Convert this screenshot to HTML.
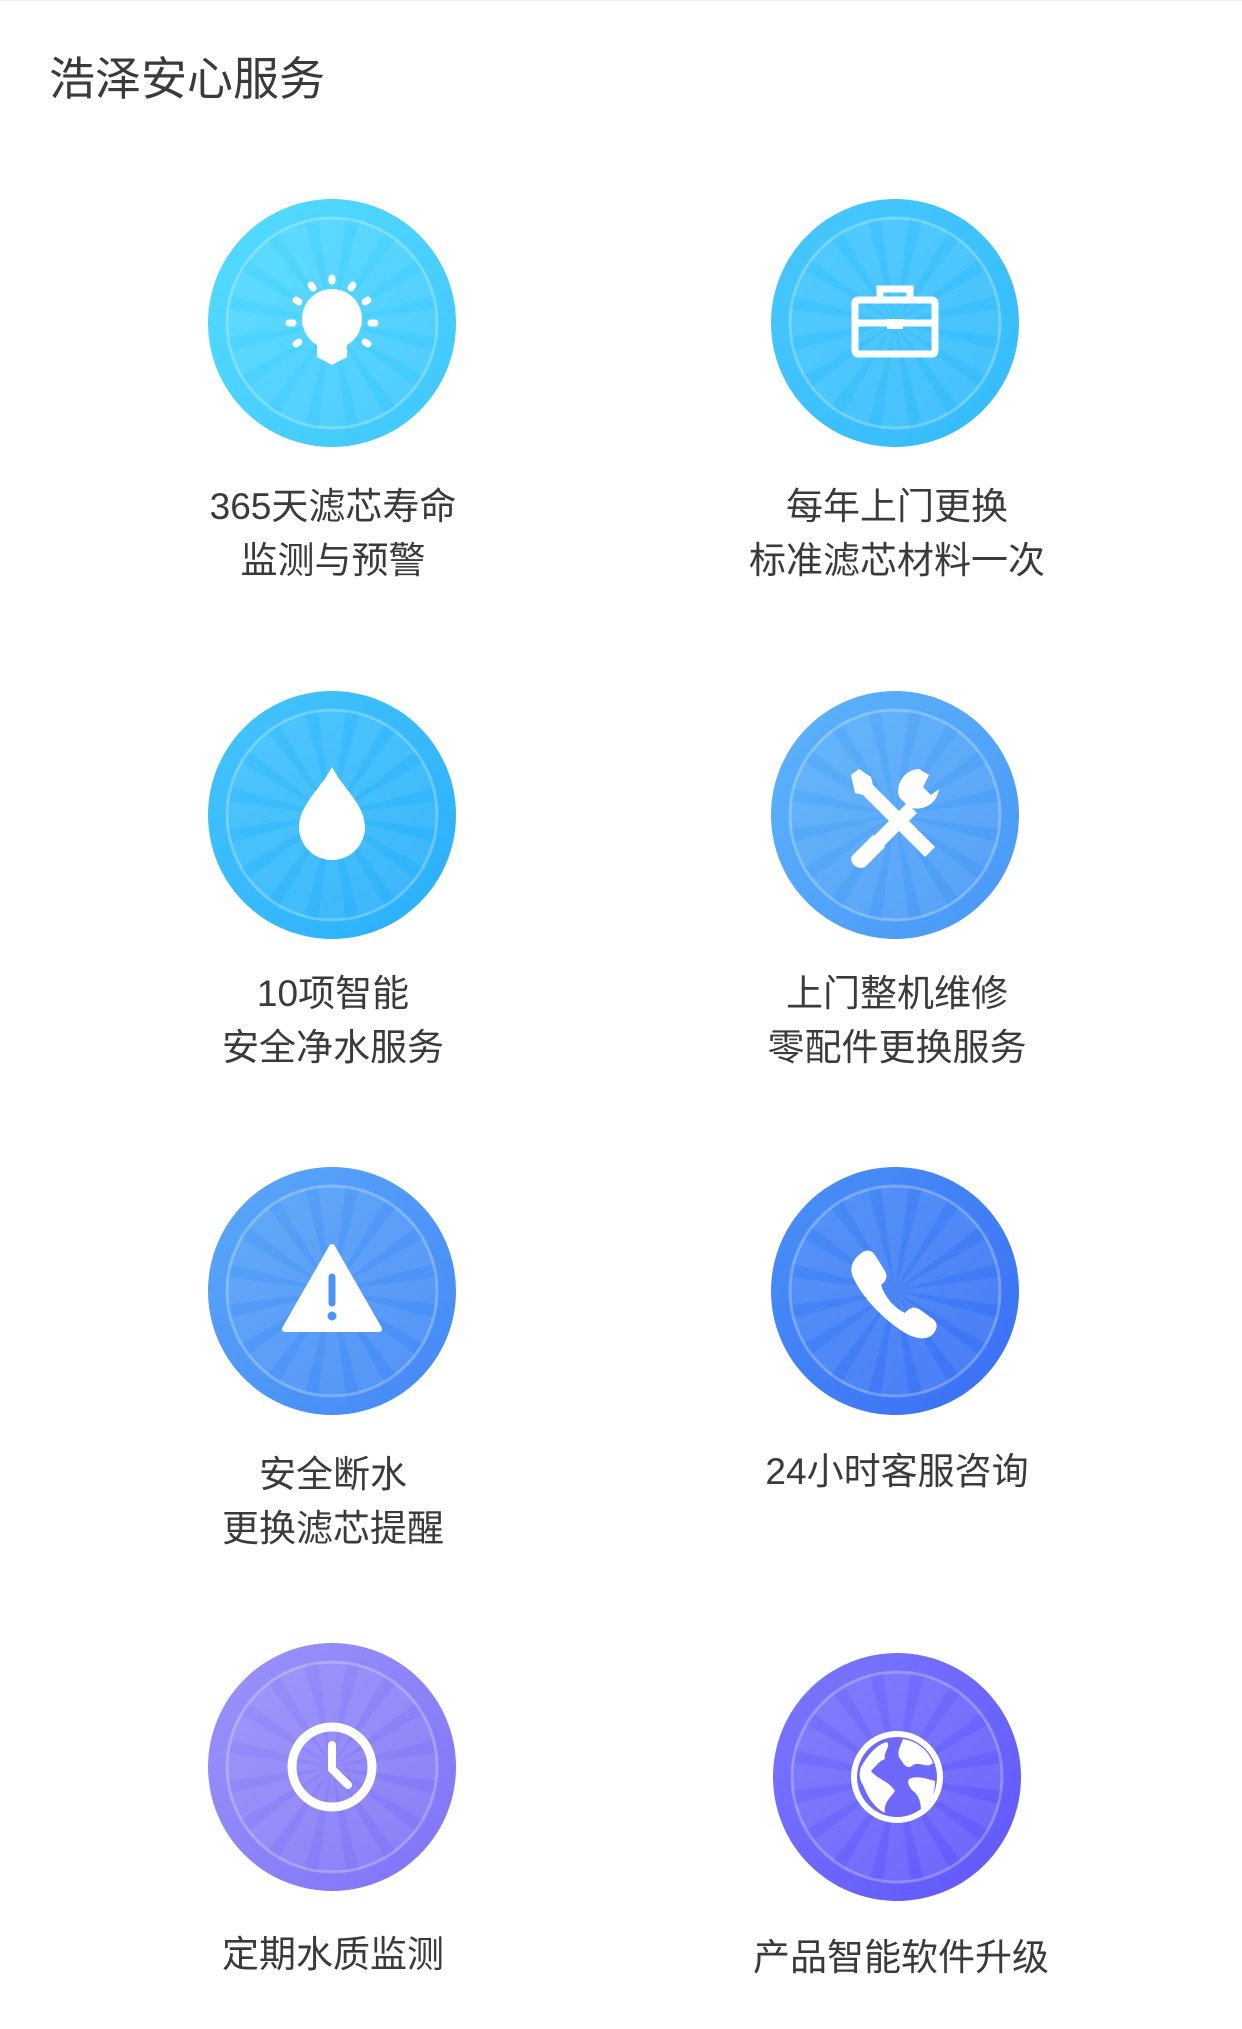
<!DOCTYPE html>
<html><head><meta charset="utf-8"><style>
body{margin:0;background:#fff;width:1242px;height:2029px;position:relative;overflow:hidden;font-family:"Liberation Sans","Noto Sans CJK SC",sans-serif;color:#3a3a3a}
.t{position:absolute;left:49px;top:43px;font-size:46px;color:#3a3a3a}
.l{position:absolute;width:520px;text-align:center;font-size:37px;line-height:54px;color:#3a3a3a}
svg{position:absolute;left:0;top:0}
</style></head><body>
<div style="position:absolute;left:0;top:0;width:1242px;height:1px;background:#eee"></div>
<div class="t">浩泽安心服务</div>
<svg width="1242" height="2029">
<defs>
<g id="rays">
<g fill="#fff" opacity="0.07">
<path d="M0 0L-14 -105L14 -105Z" transform="rotate(0)"/><path d="M0 0L-14 -105L14 -105Z" transform="rotate(22.5)"/><path d="M0 0L-14 -105L14 -105Z" transform="rotate(45)"/><path d="M0 0L-14 -105L14 -105Z" transform="rotate(67.5)"/><path d="M0 0L-14 -105L14 -105Z" transform="rotate(90)"/><path d="M0 0L-14 -105L14 -105Z" transform="rotate(112.5)"/><path d="M0 0L-14 -105L14 -105Z" transform="rotate(135)"/><path d="M0 0L-14 -105L14 -105Z" transform="rotate(157.5)"/><path d="M0 0L-14 -105L14 -105Z" transform="rotate(180)"/><path d="M0 0L-14 -105L14 -105Z" transform="rotate(202.5)"/><path d="M0 0L-14 -105L14 -105Z" transform="rotate(225)"/><path d="M0 0L-14 -105L14 -105Z" transform="rotate(247.5)"/><path d="M0 0L-14 -105L14 -105Z" transform="rotate(270)"/><path d="M0 0L-14 -105L14 -105Z" transform="rotate(292.5)"/><path d="M0 0L-14 -105L14 -105Z" transform="rotate(315)"/><path d="M0 0L-14 -105L14 -105Z" transform="rotate(337.5)"/>
</g>
<circle r="105" fill="none" stroke="#fff" stroke-opacity="0.25" stroke-width="3"/>
</g>
<linearGradient id="g1" x1="0" y1="0" x2="1" y2="1"><stop offset="0" stop-color="#55dcfe"/><stop offset="1" stop-color="#3fc6fd"/></linearGradient>
<linearGradient id="g2" x1="0" y1="0" x2="1" y2="1"><stop offset="0" stop-color="#47c8fd"/><stop offset="1" stop-color="#35bbfc"/></linearGradient>
<linearGradient id="g3" x1="0" y1="0" x2="1" y2="1"><stop offset="0" stop-color="#45c5fd"/><stop offset="1" stop-color="#29aefb"/></linearGradient>
<linearGradient id="g4" x1="0" y1="0" x2="1" y2="1"><stop offset="0" stop-color="#5db4fa"/><stop offset="1" stop-color="#4996f8"/></linearGradient>
<linearGradient id="g5" x1="0" y1="0" x2="1" y2="1"><stop offset="0" stop-color="#5aa8f9"/><stop offset="1" stop-color="#4487f6"/></linearGradient>
<linearGradient id="g6" x1="0" y1="0" x2="1" y2="1"><stop offset="0" stop-color="#4a91f7"/><stop offset="1" stop-color="#3a6ef5"/></linearGradient>
<linearGradient id="g7" x1="0" y1="0" x2="1" y2="1"><stop offset="0" stop-color="#9a94fa"/><stop offset="1" stop-color="#7f72f7"/></linearGradient>
<linearGradient id="g8" x1="0" y1="0" x2="1" y2="1"><stop offset="0" stop-color="#7b78fd"/><stop offset="1" stop-color="#5f56fc"/></linearGradient>
</defs>
<g transform="translate(332,323)"><circle r="124" fill="url(#g1)"/><use href="#rays"/>
<circle cx="0" cy="-4" r="30" fill="#fff"/><path d="M-15 16H15V34L0 42L-15 34Z" fill="#fff"/>
<g stroke="#fff" stroke-width="7" stroke-linecap="round"><path d="M0 -45v3M-21 -38l2 3M21 -38l-2 3M-36 -23l3 2M36 -23l-3 2M-43 0h4M43 0h-4M-36 21l3 -2M36 21l-3 -2"/></g></g>
<g transform="translate(895,323)"><circle r="124" fill="url(#g2)"/><use href="#rays"/>
<g fill="none" stroke="#fff" stroke-width="7"><rect x="-40" y="-23" width="80" height="54" rx="3"/><path d="M-15 -23v-11h30v11M-40 0h80"/></g><rect x="-8" y="-4" width="16" height="10" fill="#fff"/></g>
<g transform="translate(332,815)"><circle r="124" fill="url(#g3)"/><use href="#rays"/>
<path d="M0 -48C-10 -28 -33 -10 -33 12A33 33 0 0 0 33 12C33 -10 10 -28 0 -48Z" fill="#fff"/></g>
<g transform="translate(895,815)"><circle r="124" fill="url(#g4)"/><use href="#rays"/>
<g fill="#fff"><path d="M-44 -40L-36 -46L-24 -38L-22 -30L40 32L30 42L-32 -20L-40 -22Z"/>
<path d="M12 -12L-30 30L-20 40L22 -2Z"/>
<path d="M24 -46A22 22 0 0 0 4 -18L14 -8A22 22 0 0 0 44 -26L36 -20L28 -28L34 -40Z"/>
<path d="M-22 20L-44 42A10 10 0 0 0 -30 52L-10 32Z"/></g></g>
<g transform="translate(332,1291)"><circle r="124" fill="url(#g5)"/><use href="#rays"/>
<path d="M0 -44L-47 38H47Z" fill="#fff" stroke="#fff" stroke-width="6" stroke-linejoin="round"/><path d="M0 -14V12" stroke="#4a95f7" stroke-width="7" stroke-linecap="round"/><circle cy="25" r="4.5" fill="#4a95f7"/></g>
<g transform="translate(895,1291)"><circle r="124" fill="url(#g6)"/><use href="#rays"/>
<path d="M-36 -36C-30 -42 -24 -42 -20 -36L-10 -20C-7 -14 -9 -10 -14 -6C-10 6 -2 16 10 22C14 17 18 15 24 18L38 28C43 32 43 38 37 44C30 50 18 48 4 38C-16 24 -34 4 -42 -14C-46 -24 -42 -31 -36 -36Z" fill="#fff"/></g>
<g transform="translate(332,1767)"><circle r="124" fill="url(#g7)"/><use href="#rays"/>
<circle r="40" fill="none" stroke="#fff" stroke-width="9"/><path d="M0 -22V2L16 18" fill="none" stroke="#fff" stroke-width="8" stroke-linecap="round"/></g>
<g transform="translate(897,1777)"><circle r="124" fill="url(#g8)"/><use href="#rays"/>
<circle r="46" fill="#fff"/><circle r="40" fill="#6e68fc"/>
<path d="M-36 -10C-30 -20 -22 -32 -10 -35C-6 -30 -14 -25 -12 -18C-18 -16 -22 -10 -26 -6C-20 2 -8 4 -2 14C-6 20 -14 26 -12 36C-24 30 -30 18 -34 8C-38 2 -38 -4 -36 -10Z M6 -38C20 -36 32 -26 36 -14C30 -8 22 -16 16 -12C10 -6 6 -14 2 -20C0 -26 4 -32 6 -38Z M12 2C20 -2 30 2 38 4C38 18 32 28 24 34C24 26 22 18 16 14C12 10 10 6 12 2Z" fill="#fff"/></g>
</svg>
<div class="l" style="left:73px;top:480px">365天滤芯寿命<br>监测与预警</div>
<div class="l" style="left:637px;top:480px">每年上门更换<br>标准滤芯材料一次</div>
<div class="l" style="left:73px;top:967px">10项智能<br>安全净水服务</div>
<div class="l" style="left:637px;top:967px">上门整机维修<br>零配件更换服务</div>
<div class="l" style="left:73px;top:1448px">安全断水<br>更换滤芯提醒</div>
<div class="l" style="left:637px;top:1445px">24小时客服咨询</div>
<div class="l" style="left:73px;top:1928px">定期水质监测</div>
<div class="l" style="left:641px;top:1931px">产品智能软件升级</div>
</body></html>
